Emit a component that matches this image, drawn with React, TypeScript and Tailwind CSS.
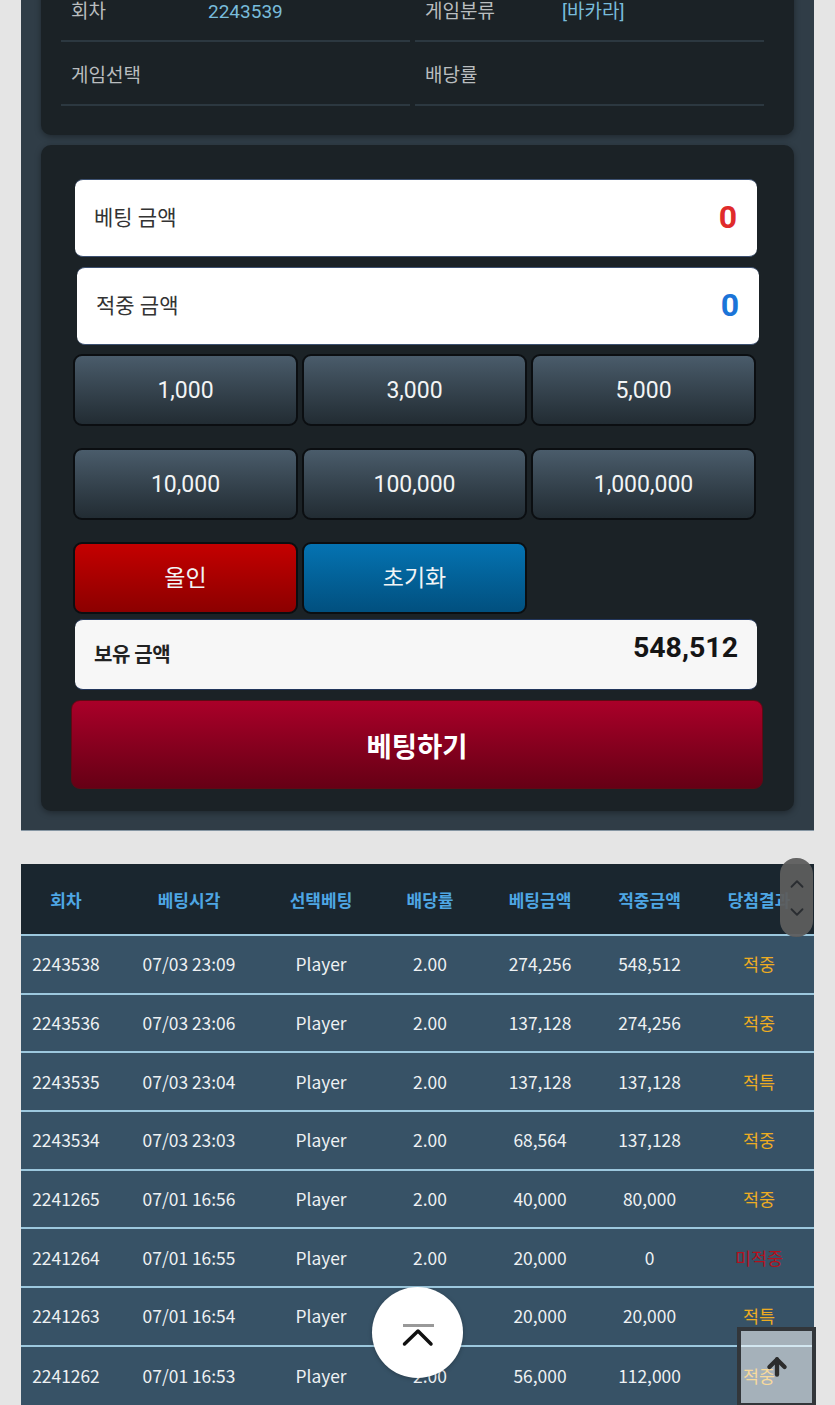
import React from 'react';
import { ArrowUp, ChevronDown, ChevronUp } from 'lucide-react';

const FONT = 'font-["Roboto","Noto_Sans_CJK_KR",sans-serif]';

const amounts = ['1,000', '3,000', '5,000', '10,000', '100,000', '1,000,000'];

const history = [
  ['2243538', '07/03 23:09', 'Player', '2.00', '274,256', '548,512', '적중'],
  ['2243536', '07/03 23:06', 'Player', '2.00', '137,128', '274,256', '적중'],
  ['2243535', '07/03 23:04', 'Player', '2.00', '137,128', '137,128', '적특'],
  ['2243534', '07/03 23:03', 'Player', '2.00', '68,564', '137,128', '적중'],
  ['2241265', '07/01 16:56', 'Player', '2.00', '40,000', '80,000', '적중'],
  ['2241264', '07/01 16:55', 'Player', '2.00', '20,000', '0', '미적중'],
  ['2241263', '07/01 16:54', 'Player', '2.00', '20,000', '20,000', '적특'],
  ['2241262', '07/01 16:53', 'Player', '2.00', '56,000', '112,000', '적중'],
];

const headers = ['회차', '베팅시각', '선택베팅', '배당률', '베팅금액', '적중금액', '당첨결과'];

const InfoCell: React.FC<{ label: string; value?: string }> = ({ label, value }) => (
  <div className="flex h-[64px] items-center border-b-2 border-[#2c3840] pl-[10px] pt-[6px]">
    <span className="w-[137px] text-[19px] text-[#b9bdbf]">{label}</span>
    {value && <span className="text-[19px] text-[#78bcdb]">{value}</span>}
  </div>
);

const GameButton: React.FC<{ label: string; className: string }> = ({ label, className }) => (
  <button className={`flex h-[72px] items-center justify-center rounded-[9px] border-2 border-[#0b0e11] pt-[3px] text-[23px] font-normal text-[#f2f4f5] ${className}`}>
    {label}
  </button>
);

const App: React.FC = () => {
  return (
    <div className={`relative h-[1405px] overflow-hidden bg-[#e5e5e5] px-[21px] ${FONT}`}>
      {/* page is scrolled, the top of the form is cut off */}
      <div className="-mt-[22px] flex flex-col gap-[10px] border-b border-[#8696a3] bg-[#303d47] px-[20px] pb-[19px]">
        <div className="rounded-b-[10px] bg-[#1b2226] pl-[20px] pr-[30px] pb-[29px] shadow-[0_2px_6px_rgba(0,0,0,0.35)]">
          <div className="grid grid-cols-2 gap-x-[5px]">
            <InfoCell label="회차" value="2243539" />
            <InfoCell label="게임분류" value="[바카라]" />
            <InfoCell label="게임선택" />
            <InfoCell label="배당률" />
          </div>
        </div>

        <div className="flex flex-col rounded-[10px] bg-[#1b2226] px-[30px] pt-[34px] pb-[22px] shadow-[0_2px_6px_rgba(0,0,0,0.35)]">
          <div className="ml-[4px] flex h-[78px] w-[682px] items-center justify-between rounded-[8px] border-t border-b border-[#3c5070] bg-white pl-[19px] pr-[20px]">
            <span className="pt-[1px] text-[21px] text-[#333]">베팅 금액</span>
            <span className="-mt-[3px] text-[32px] font-bold text-[#e02b2b]">0</span>
          </div>
          <div className="mt-[10px] ml-[6px] flex h-[78px] w-[682px] items-center justify-between rounded-[8px] border-t border-b border-[#3c5070] bg-white pl-[19px] pr-[20px]">
            <span className="pt-[1px] text-[21px] text-[#333]">적중 금액</span>
            <span className="-mt-[3px] text-[32px] font-bold text-[#1b74d8]">0</span>
          </div>

          <div className="mt-[9px] ml-[2px] grid w-[683px] grid-cols-3 gap-x-[4px] gap-y-[22px]">
            {amounts.map((amount) => (
              <GameButton key={amount} label={amount} className="bg-gradient-to-b from-[#4a5c6b] to-[#222c33]" />
            ))}
            <GameButton label="올인" className="bg-gradient-to-b from-[#c40000] to-[#8c0000]" />
            <GameButton label="초기화" className="bg-gradient-to-b from-[#0573b2] to-[#01507f]" />
          </div>

          <div className="mt-[5px] ml-[4px] flex h-[71px] w-[682px] items-center justify-between rounded-[8px] border-t border-b border-[#22365c] bg-[#f7f7f7] pl-[19px] pr-[19px]">
            <span className="text-[20px] font-bold tracking-[-0.5px] text-[#222]">보유 금액</span>
            <span className="-mt-[13px] text-[28.5px] font-bold text-[#151515]">548,512</span>
          </div>

          <button className="mt-[10px] flex h-[89px] w-[692px] items-center justify-center rounded-[9px] border border-[#5e0a14] bg-gradient-to-b from-[#aa0029] to-[#660015] pt-[6px] text-[27.5px] font-bold text-white">
            베팅하기
          </button>
        </div>
      </div>

      <table className="mt-[33px] w-full table-fixed border-collapse bg-[#375266] font-['Noto_Sans_CJK_KR',sans-serif] text-[17.4px] text-[#eef1f3]">
        <colgroup>
          <col className="w-[90px]" />
          <col className="w-[156px]" />
          <col className="w-[108px]" />
          <col className="w-[110px]" />
          <col className="w-[110px]" />
          <col className="w-[109px]" />
          <col className="w-[110px]" />
        </colgroup>
        <thead>
          <tr className="h-[71px] bg-[#1a262f]">
            {headers.map((h) => (
              <th key={h} className="overflow-hidden whitespace-nowrap pt-[1px] text-center text-[17px] font-bold text-[#4ea6e4]">
                {h}
              </th>
            ))}
          </tr>
        </thead>
        <tbody>
          {history.map((row) => (
            <tr key={row[0]} className="h-[58.7px] border-t-2 border-[#9cc8de]">
              {row.map((cell, i) => (
                <td
                  key={i}
                  className={`text-center ${
                    i === 6 ? (cell === '미적중' ? 'text-[#b3101c]' : 'text-[#edac22]') : ''
                  }`}
                >
                  {cell}
                </td>
              ))}
            </tr>
          ))}
        </tbody>
      </table>

      {/* native scroll helper over the table header */}
      <div className="absolute left-[780px] top-[858px] flex h-[79px] w-[33px] flex-col items-center justify-center gap-[6px] rounded-[16px] bg-[#5d5d5d]/95">
        <ChevronUp className="h-[22px] w-[22px] text-[#2a2d31]" strokeWidth={2} />
        <ChevronDown className="h-[22px] w-[22px] text-[#2a2d31]" strokeWidth={2} />
      </div>

      {/* round scroll-to-top button */}
      <button className="absolute left-[372px] top-[1287px] flex h-[91px] w-[91px] items-center justify-center rounded-full bg-white shadow-[0_1px_4px_rgba(0,0,0,0.25)]">
        <svg width="34" height="24" viewBox="0 0 34 24" fill="none" className="mt-[4px]">
          <path d="M2 2.5H33" stroke="#999" strokeWidth="3" />
          <path d="M3.5 21L17 8L30 21" stroke="#111" strokeWidth="3.5" strokeLinecap="round" strokeLinejoin="round" />
        </svg>
      </button>

      {/* square top button */}
      <button className="absolute left-[737px] top-[1327px] flex h-[80px] w-[79px] items-center justify-center border-[4px] border-[#32363a] bg-white/55">
        <ArrowUp className="h-[26px] w-[26px] text-[#2c2c2c]" strokeWidth={4} />
      </button>
    </div>
  );
};

export default App;
